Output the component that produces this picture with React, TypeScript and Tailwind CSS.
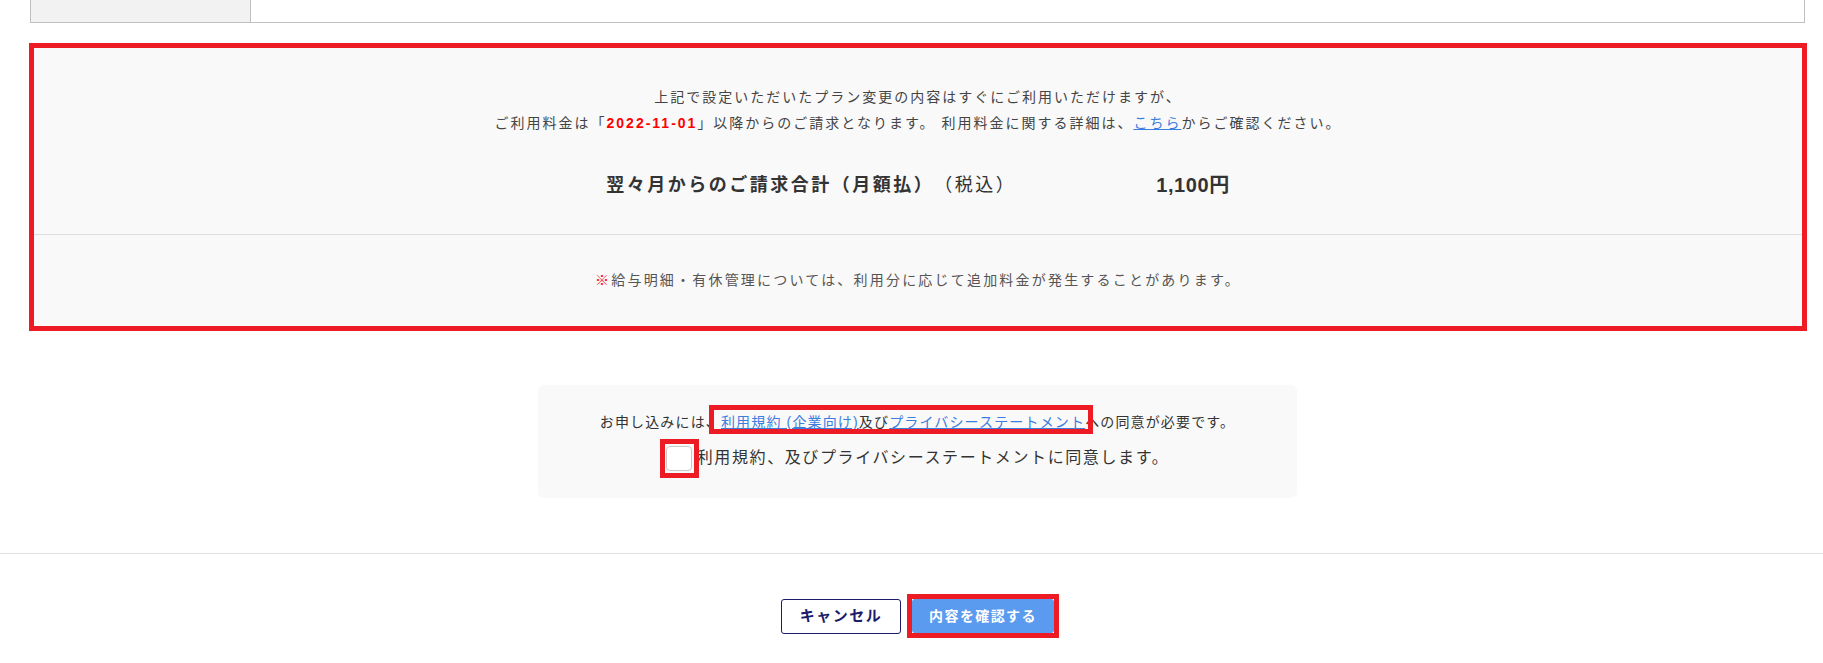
export default function App() {
  const red = "border-[#ed1c24]";
  return (
    <div className="w-[1823px] h-[663px] overflow-hidden bg-white font-['Liberation_Sans','Noto_Sans_CJK_JP',sans-serif] text-[#333]">
      <div className="ml-[30px] w-[1775px]">
        {/* top table remnant */}
        <div className="flex h-[23px] border-x border-b border-[#c0c0c0]">
          <div className="w-[220px] border-r border-[#c0c0c0] bg-[#f2f2f2]" />
          <div className="flex-1 bg-white" />
        </div>

        {/* billing summary (annotated with red frame) */}
        <div className={`mt-[20px] -ml-[1px] -mr-[2px] border-[5px] ${red} bg-[#f9f9f9]`}>
          <div className="pt-[36px] pb-[35px] text-center">
            <p className="text-[14px] leading-[26px] tracking-[2px] text-[#444]">
              上記で設定いただいたプラン変更の内容はすぐにご利用いただけますが、
            </p>
            <p className="text-[14px] leading-[26px] tracking-[2px] text-[#444]">
              ご利用料金は「<span className="font-bold text-[#f00]">2022-11-01</span>」以降からのご請求となります。 利用料金に関する詳細は、
              <a className="text-[#3c7de0] underline">こちら</a>からご確認ください。
            </p>
            <div className="mt-[35px] flex h-[28px] items-center justify-center text-[18px] leading-[28px] tracking-[2.5px] text-[#333]">
              <span className="font-bold">翌々月からのご請求合計（月額払）</span>
              <span>（税込）</span>
              <span className="ml-[140px] text-[20px] font-bold tracking-[0.6px]">1,100円</span>
            </div>
          </div>
          <div className="border-t border-[#dddddd]" />
          <div className="flex h-[91px] items-center justify-center text-[14px] tracking-[2.2px] text-[#555]">
            <span className="text-[#f00]">※</span>給与明細・有休管理については、利用分に応じて追加料金が発生することがあります。
          </div>
        </div>

        {/* agreement box */}
        <div className="mx-auto mt-[54px] w-[759px] rounded-[6px] bg-[#f9f9f9] pt-[25px] pb-[27px]">
          <p className="text-center text-[14px] leading-[24px] tracking-[1.15px] text-[#333]">
            お申し込みには、
            <span className="relative">
              <a className="text-[#3c7de0] underline">利用規約 (企業向け)</a>及び
              <a className="text-[#3c7de0] underline">プライバシーステートメント</a>
              <span className={`pointer-events-none absolute -left-[12px] -right-[8px] -top-[9px] -bottom-[4px] border-[5px] ${red}`} />
            </span>
            への同意が必要です。
          </p>
          <div className="mt-[11px] flex items-center justify-center gap-[5px]">
            <span className="relative inline-block">
              <span className="block h-[25px] w-[26px] rounded-[4px] border border-[#c8c8c8] bg-white" />
              <span className={`pointer-events-none absolute -left-[6px] -right-[7px] -top-[7px] -bottom-[7px] border-[5px] ${red}`} />
            </span>
            <span className="text-[16px] leading-[26px] tracking-[1.6px] text-[#333]">
              利用規約、及びプライバシーステートメントに同意します。
            </span>
          </div>
        </div>
      </div>

      <div className="mt-[55px] h-px bg-[#e0e0e0]" />

      <div className="ml-[30px] mt-[45px] flex w-[1775px] items-start justify-center gap-[11px]">
        <button className="flex h-[35px] w-[120px] items-center justify-center rounded-[3px] border border-[#1d1b6b] bg-white text-[15px] font-bold tracking-[1.5px] text-[#1d1b6b]">
          キャンセル
        </button>
        <span className="relative inline-block">
          <button className="flex h-[34px] w-[142px] items-center justify-center rounded-[3px] bg-[#5b9bef] text-[14px] font-bold tracking-[1.4px] text-white">
            内容を確認する
          </button>
          <span className={`pointer-events-none absolute -inset-[5px] border-[5px] ${red}`} />
        </span>
      </div>
    </div>
  );
}
